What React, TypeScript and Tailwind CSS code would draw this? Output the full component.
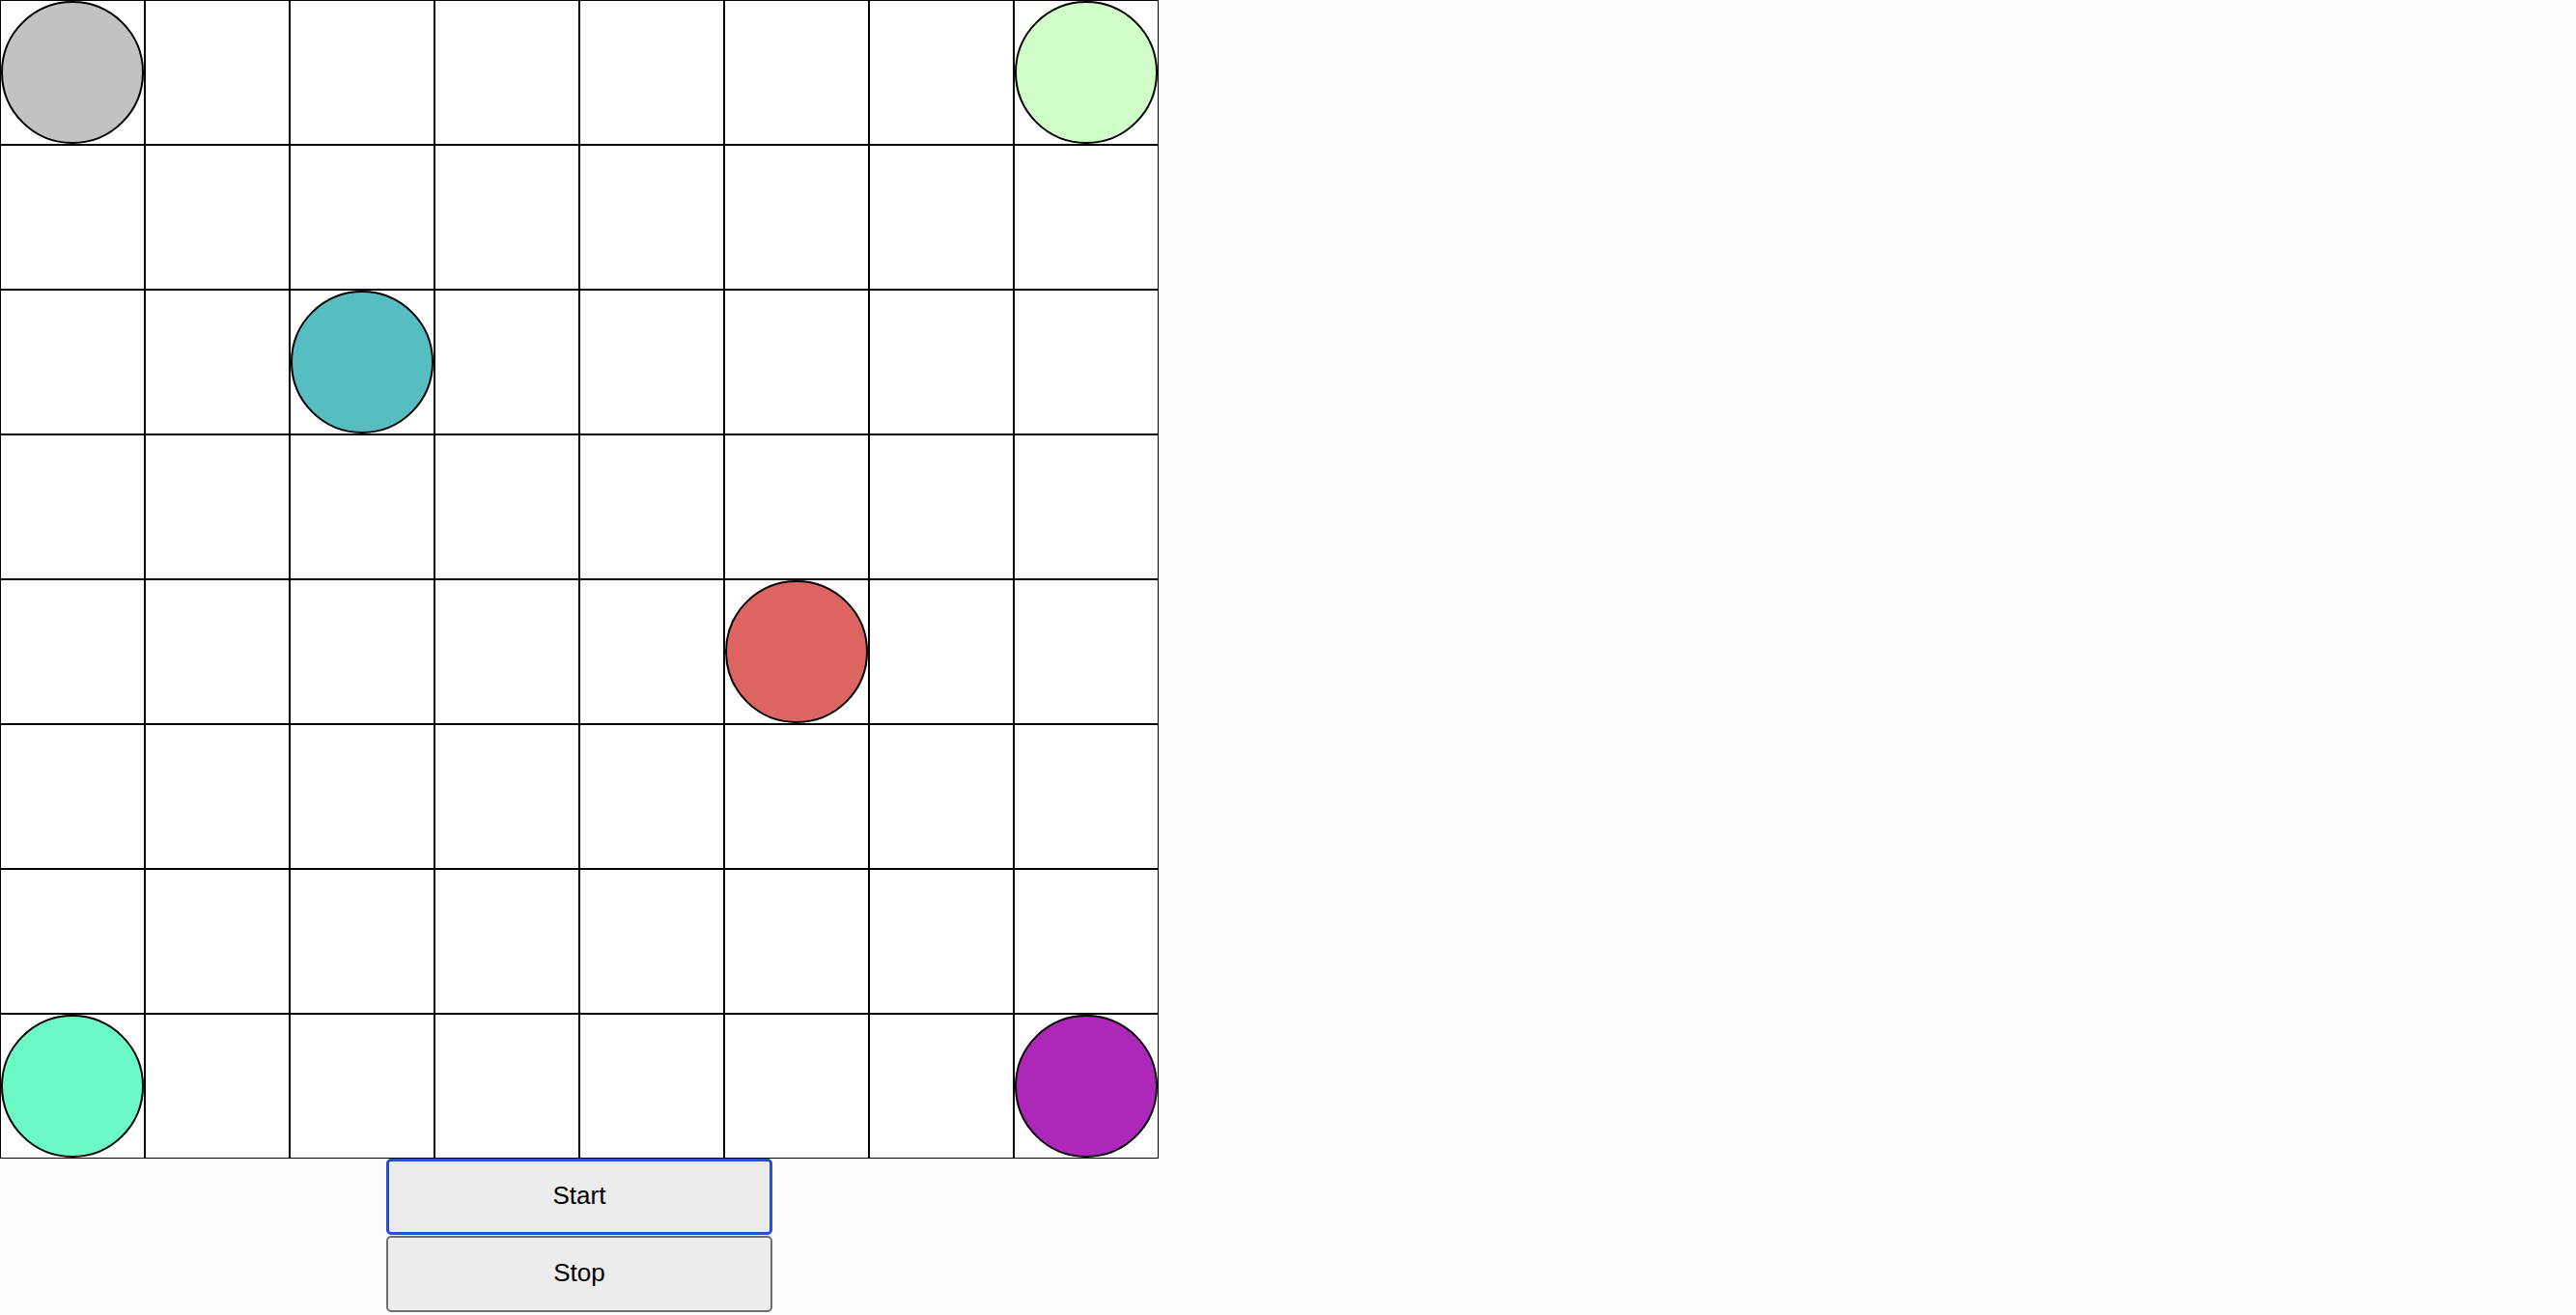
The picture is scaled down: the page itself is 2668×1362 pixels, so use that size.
const SIZE = 8;

const pieces: Record<string, string> = {
  "0-0": "bg-[#c2c2c2]",
  "0-7": "bg-[#d0fcc8]",
  "2-2": "bg-[#56bdc1]",
  "4-5": "bg-[#dc6561]",
  "7-0": "bg-[#6bfac6]",
  "7-7": "bg-[#ad28b8]",
};

const Cell = ({ row, col }: { row: number; col: number }) => {
  const piece = pieces[`${row}-${col}`];
  return (
    <div className="h-[150px] border border-black bg-white">
      {piece && (
        <div className={`h-full w-full rounded-full border-2 border-black ${piece}`} />
      )}
    </div>
  );
};

export default function App() {
  const cells = [];
  for (let r = 0; r < SIZE; r++) {
    for (let c = 0; c < SIZE; c++) {
      cells.push(<Cell key={`${r}-${c}`} row={r} col={c} />);
    }
  }

  return (
    <div className="h-screen overflow-hidden bg-[#fafafa] font-['Liberation_Sans',Arial,sans-serif] text-black">
      <div className="w-[1200px]">
        <div className="grid grid-cols-8">{cells}</div>
        <div className="flex flex-col items-center">
          <button className="h-[79px] w-[400px] rounded-[5px] border-[3px] border-[#2453c6] bg-[#ececec] pb-[2px] text-[26px]">
            Start
          </button>
          <button className="mt-px h-[79px] w-[400px] rounded-[5px] border-2 border-[#6f6f6f] bg-[#ececec] pb-[2px] text-[26px]">
            Stop
          </button>
        </div>
      </div>
    </div>
  );
}
